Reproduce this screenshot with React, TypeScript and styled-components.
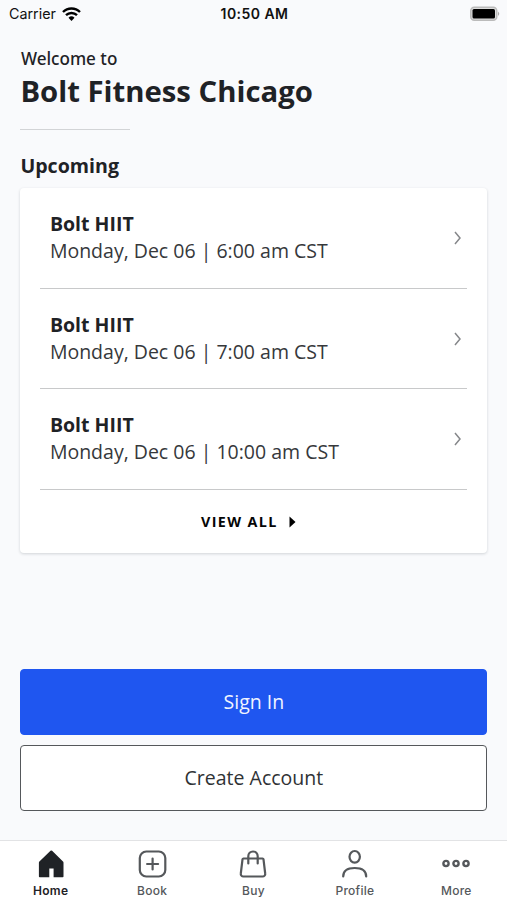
import React from 'react';
import styled, { createGlobalStyle } from 'styled-components';

const Global = createGlobalStyle`
  *, *::before, *::after { box-sizing: border-box; }
  html, body { margin: 0; background: #f9fafc; }
  body { font-family: "Open Sans", "Noto Sans", sans-serif; color: #1f2226; }
  button { font: inherit; color: inherit; cursor: pointer; }
`;

const Screen = styled.div`
  width: 100%;
  max-width: 507px;
  height: 900px;
  display: flex;
  flex-direction: column;
  overflow: hidden;
  background: #f9fafc;
`;

const StatusBar = styled.div`
  height: 28px;
  flex: none;
  display: grid;
  grid-template-columns: 1fr auto 1fr;
  align-items: center;
  padding: 0 7px 1px 9px;
  font-family: Inter, "Liberation Sans", sans-serif;
  font-size: 14.3px;
  color: #111;
`;

const Carrier = styled.div`
  display: flex;
  align-items: center;
  gap: 6px;
`;

const Clock = styled.div`
  font-weight: 600;
  font-size: 14px;
  letter-spacing: 0.45px;
`;

const BatterySlot = styled.div`
  display: flex;
  justify-content: flex-end;
`;

const Content = styled.main`
  flex: 1;
  display: flex;
  flex-direction: column;
  padding: 18px 19.600px 29px 20.400px;
`;

const Welcome = styled.div`
  padding-left: 0.500px;
  font-family: "Noto Sans", "Open Sans", sans-serif;
  font-size: 17.1px;
  line-height: 25px;
  font-weight: 500;
`;

const Title = styled.h1`
  margin: 0;
  font-size: 29.3px;
  line-height: 40px;
  font-weight: 700;
`;

const ShortRule = styled.div`
  width: 110px;
  height: 1px;
  margin-top: 18px;
  background: #d2d4d6;
`;

const SectionTitle = styled.h2`
  margin: 22px 0 8px;
  font-size: 19.600px;
  line-height: 28px;
  font-weight: 700;
`;

const Card = styled.section`
  display: flex;
  flex-direction: column;
  height: 365px;
  padding: 0 20px;
  background: #fff;
  border-radius: 4px;
  box-shadow: 0 1px 3px rgba(30, 40, 50, 0.18);
`;

const ClassRow = styled.div`
  display: flex;
  align-items: center;
  justify-content: space-between;
  height: 100.7px;
  padding: 0 4px 0 9.500px;
  border-bottom: 1px solid #c8c9ca;
`;

const ClassInfo = styled.div`
  padding-bottom: 2px;
`;

const ClassName = styled.div`
  font-size: 19.5px;
  line-height: 27px;
  font-weight: 700;
`;

const ClassTime = styled.div`
  font-size: 19.5px;
  line-height: 27px;
  color: #36383b;
`;

const ViewAll = styled.button`
  flex: 1;
  display: flex;
  align-items: center;
  justify-content: center;
  gap: 11px;
  padding: 0 11px 0 0;
  border: 0;
  background: none;
  font-size: 14.3px;
  font-weight: 700;
  letter-spacing: 1.4px;
  color: #050505;
`;

const Actions = styled.div`
  margin-top: auto;
  display: flex;
  flex-direction: column;
  gap: 10px;
`;

const ActionButton = styled.button<{ $primary?: boolean }>`
  height: 66px;
  padding: 0 0 2px;
  border-radius: 4px;
  border: 1px solid ${(p) => (p.$primary ? '#1f56f0' : '#55585b')};
  background: ${(p) => (p.$primary ? '#1f56f0' : '#fff')};
  color: ${(p) => (p.$primary ? '#f0f4ff' : '#2f3235')};
  font-size: 19.5px;
`;

const TabBar = styled.nav`
  flex: none;
  height: 60px;
  display: grid;
  grid-template-columns: repeat(5, 1fr);
  background: #fff;
  border-top: 1px solid #e2e3e5;
`;

const Tab = styled.a<{ $active?: boolean }>`
  display: flex;
  flex-direction: column;
  align-items: center;
  padding-top: 8px;
  gap: 3px;
  color: ${(p) => (p.$active ? '#1f2226' : '#55585b')};
  font-family: Inter, "Liberation Sans", sans-serif;
  font-size: 12px;
  line-height: 18px;
  letter-spacing: 0.25px;
  font-weight: ${(p) => (p.$active ? 600 : 500)};
`;

const classes = ['6:00', '7:00', '10:00'];

const stroke = { fill: 'none', stroke: 'currentColor', strokeWidth: 2.2, strokeLinecap: 'round', strokeLinejoin: 'round' } as const;

const Icons = {
  Home: (
    <svg width="30" height="30" viewBox="0 0 30 30">
      <path d="M15.300 1.500a1 1 0 0 1 .8.3L27 12.500a1.600 1.600 0 0 1 .5 1.200V27.500a.8.8 0 0 1-.8.800H17.600V19.500h-4.300v8.800H3.700a.8.8 0 0 1-.8-.8V13.700a1.600 1.600 0 0 1 .5-1.200L14.500 1.800a1 1 0 0 1 .8-.3z" fill="currentColor" />
    </svg>
  ),
  Book: (
    <svg width="30" height="30" viewBox="0 0 30 30" {...stroke}>
      <rect x="2.800" y="2.500" width="25.500" height="25" rx="6.500" />
      <path d="M15.600 9.500v11M10.100 15h11" />
    </svg>
  ),
  Buy: (
    <svg width="30" height="30" viewBox="0 0 30 30" {...stroke}>
      <path d="M5.500 9.500h19a1 1 0 0 1 1 .8l1.700 14.200a2.600 2.600 0 0 1-2.600 3H5.400a2.600 2.600 0 0 1-2.600-3l1.700-14.200a1 1 0 0 1 1-.8z" />
      <path d="M10.300 14.500V7.200a4.700 4.700 0 0 1 9.400 0v7.300" />
    </svg>
  ),
  Profile: (
    <svg width="30" height="30" viewBox="0 0 30 30" {...stroke}>
      <ellipse cx="14.700" cy="7.800" rx="5.200" ry="5.800" />
      <path d="M3.200 27.500c0-5.500 4-8.500 11.500-8.500s11.500 3 11.500 8.500" />
    </svg>
  ),
  More: (
    <svg width="30" height="30" viewBox="0 0 30 30" {...stroke} strokeWidth={2.400}>
      <circle cx="5" cy="14.500" r="2.600" />
      <circle cx="15" cy="14.500" r="2.600" />
      <circle cx="25" cy="14.500" r="2.600" />
    </svg>
  ),
};

export default function App() {
  return (
    <Screen>
      <Global />
      <StatusBar>
        <Carrier>
          Carrier
          <svg width="19" height="14" viewBox="0 0 19 14" fill="none" stroke="#000" strokeWidth="2.400">
            <path d="M1 5a12 12 0 0 1 17 0M4 8.200a7.800 7.800 0 0 1 11 0" />
            <path d="M9.500 14L6.500 10.800a4.300 4.300 0 0 1 6 0z" fill="#000" stroke="none" />
          </svg>
        </Carrier>
        <Clock>10:50 AM</Clock>
        <BatterySlot>
          <svg width="30" height="16" viewBox="0 0 30 16">
            <rect x="0.750" y="1.250" width="26" height="13" rx="3.500" fill="#ddd" stroke="#bbb" strokeWidth="1.500" />
            <rect x="2.500" y="3" width="22.500" height="9.500" rx="1.500" fill="#000" />
            <path d="M28 5.500v4.500q2.500-2.200 0-4.500z" fill="#aaa" />
          </svg>
        </BatterySlot>
      </StatusBar>
      <Content>
        <Welcome>Welcome to</Welcome>
        <Title>Bolt Fitness Chicago</Title>
        <ShortRule />
        <SectionTitle>Upcoming</SectionTitle>
        <Card>
          {classes.map((time) => (
            <ClassRow key={time}>
              <ClassInfo>
                <ClassName>Bolt HIIT</ClassName>
                <ClassTime>Monday, Dec 06 | {time} am CST</ClassTime>
              </ClassInfo>
              <svg width="10" height="16" viewBox="0 0 10 16" fill="none" stroke="#85878a" strokeWidth="1.500">
                <path d="M2 2l5 6-5 6" />
              </svg>
            </ClassRow>
          ))}
          <ViewAll>
            VIEW ALL
            <svg width="7" height="12" viewBox="0 0 7 12">
              <path d="M0.500 0.500L6.500 6l-6 5.500z" fill="#000" />
            </svg>
          </ViewAll>
        </Card>
        <Actions>
          <ActionButton $primary>Sign In</ActionButton>
          <ActionButton>Create Account</ActionButton>
        </Actions>
      </Content>
      <TabBar>
        {Object.entries(Icons).map(([label, icon]) => (
          <Tab key={label} $active={label === 'Home'}>
            {icon}
            {label}
          </Tab>
        ))}
      </TabBar>
    </Screen>
  );
}
